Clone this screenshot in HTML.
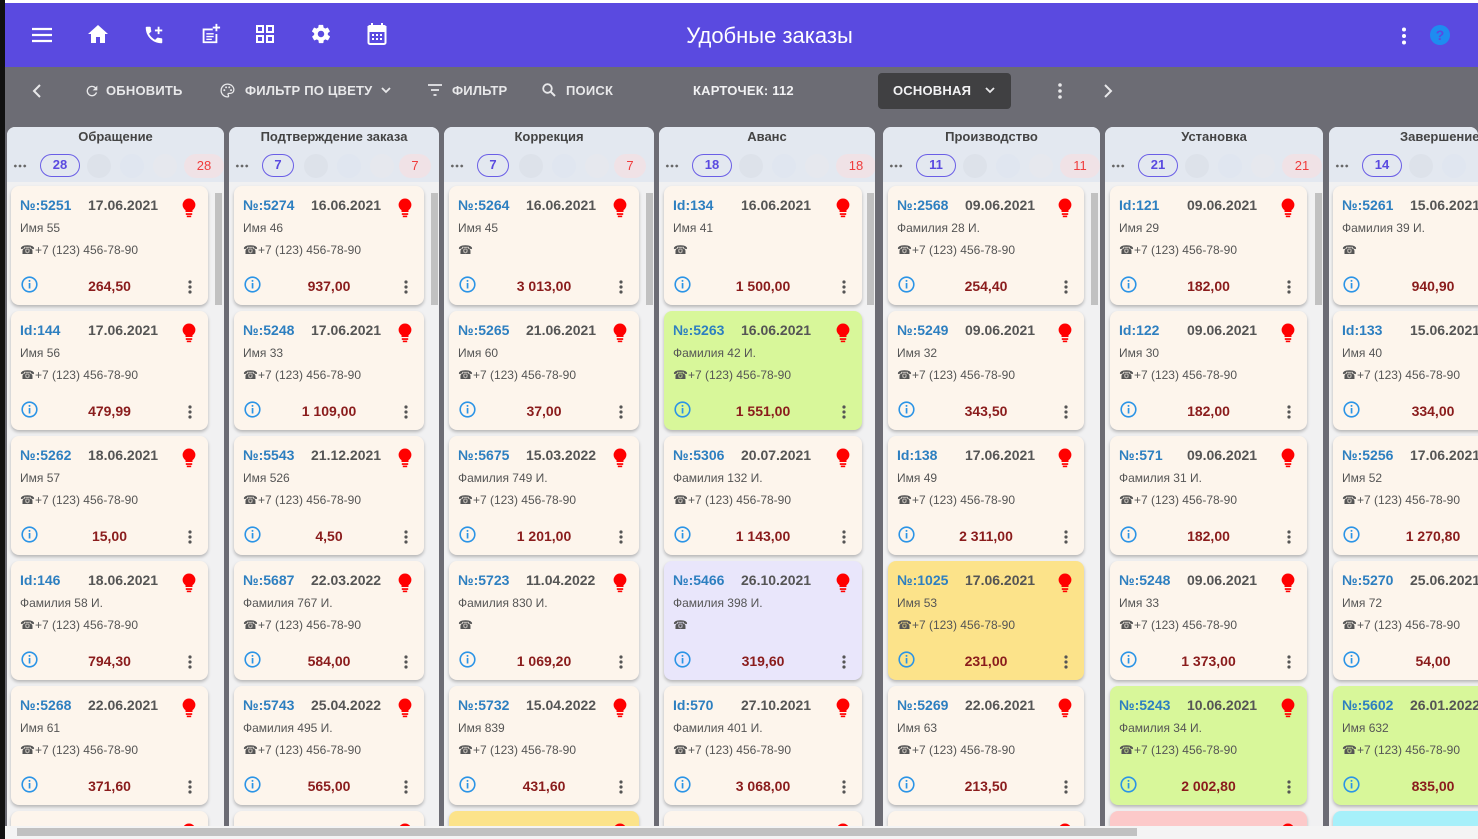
<!DOCTYPE html>
<html><head><meta charset="utf-8">
<style>
*{box-sizing:border-box;margin:0;padding:0}
html,body{overflow:hidden}
body{width:1478px;height:839px;overflow:hidden;background:#fff;font-family:"Liberation Sans",Arial,sans-serif;position:relative}
#lb{position:absolute;left:0;top:0;width:5px;height:839px;background:#111}
#hdr{position:absolute;left:5px;top:3px;width:1473px;height:64px;background:#5a4ae0}
#hdr svg{position:absolute}
#title{position:absolute;left:28px;width:1473px;top:20px;text-align:center;color:#fff;font-size:22px}
#tb{position:absolute;left:5px;top:67px;width:1473px;height:759px;background:#6c6c74;overflow:hidden}
.tbt{position:absolute;top:16px;color:#e8e8ea;font-size:13px;font-weight:bold;letter-spacing:.2px}
.col{position:absolute;top:60px;height:699px;background:#f1f1f2;border-radius:8px 8px 0 0;overflow:hidden}
.ch{position:absolute;left:0;top:0;width:100%;height:55px;background:#e3e8f0}
.ct{position:absolute;top:2px;width:100%;text-align:center;font-size:13px;font-weight:bold;color:#444}
.dd{position:absolute;left:6px;top:37px;width:14px;height:4px;background:radial-gradient(circle,#666 1.2px,transparent 1.5px) 0 0/4.7px 4px repeat-x}
.bo{position:absolute;left:33px;top:27px;width:40px;height:23px;border:1.5px solid #6a5ee6;border-radius:12px;text-align:center;font-size:13px;line-height:20px;color:#5a4ae0;font-weight:bold}
.g{position:absolute;top:27px;width:24px;height:24px;border-radius:12px}
.br{position:absolute;top:27px;width:40px;height:24px;border-radius:12px;background:#f0e2e6;color:#f03c3c;text-align:center;font-size:13px;line-height:24px}
.sb{position:absolute;top:66px;width:7px;height:112px;background:#c1c1c1}
.c{position:absolute;height:119px;background:#fdf5ec;border-radius:8px;box-shadow:0 2px 3px rgba(0,0,0,.25)}
.c .i{position:absolute;left:9px;top:11px;font-size:14px;font-weight:bold;color:#2d7fc0}
.c .d{position:absolute;left:77px;top:11px;font-size:14px;font-weight:bold;color:#555}
.c .n{position:absolute;left:9px;top:35px;font-size:12px;color:#555}
.c .p{position:absolute;left:9px;top:57px;font-size:12px;color:#555}
.c .a{position:absolute;left:40px;right:40px;top:92px;text-align:center;font-size:14px;font-weight:bold;color:#8a1c1c}
.c .bl{position:absolute;right:12px;top:12px}
.c .inf{position:absolute;left:10px;top:90px}
.c .dt{position:absolute;right:16px;top:94px}
.gr{background:#d8f79a}.lv{background:#e9e6fb}.ye{background:#fce38a}.pk{background:#fcc9c9}.cy{background:#a6f0fa}
#hs{position:absolute;left:5px;top:826px;width:1473px;height:13px;background:#f4f4f4}
#hs div{position:absolute;left:12px;top:2px;width:1120px;height:8px;background:#c1c1c1}
</style></head><body>
<div id="lb"></div>
<div id="hdr">
<svg style="left:26px;top:23px" width="22" height="18" viewBox="0 0 22 18"><path d="M1 3h20M1 9h20M1 15h20" stroke="#fff" stroke-width="2.2"/></svg>
<svg style="left:82px;top:21px" width="22" height="20" viewBox="0 0 22 20"><path d="M11 1L1 10h3v9h5v-6h4v6h5v-9h3z" fill="#fff"/></svg>
<svg style="left:138px;top:21px" width="22" height="22" viewBox="0 0 24 24"><path d="M20 15.5c-1.2 0-2.4-.2-3.6-.6-.3-.1-.7 0-1 .2l-2.2 2.2c-2.8-1.4-5.1-3.8-6.6-6.6l2.2-2.2c.3-.3.4-.7.2-1-.3-1.1-.5-2.3-.5-3.5 0-.6-.4-1-1-1H4c-.6 0-1 .4-1 1 0 9.4 7.6 17 17 17 .6 0 1-.4 1-1v-3.5c0-.6-.4-1-1-1zM18 6V3h-2v3h-3v2h3v3h2V8h3V6z" fill="#fff"/></svg>
<svg style="left:194px;top:20px" width="22" height="22" viewBox="0 0 24 24"><path d="M4 6h11v2H6v12h12v-8h2v10H4zM8 11h8v1.6H8zM8 14h8v1.6H8zM8 17h6v1.6H8zM18 1h2v3h3v2h-3v3h-2V6h-3V4h3z" fill="#fff"/></svg>
<svg style="left:250px;top:21px" width="20" height="20" viewBox="0 0 20 20"><path d="M2 2h6v6H2zM12 2h6v6h-6zM2 12h6v6H2zM12 12h6v6h-6z" fill="none" stroke="#fff" stroke-width="2"/></svg>
<svg style="left:305px;top:20px" width="22" height="22" viewBox="0 0 24 24"><path d="M19.4 13c0-.3.1-.6.1-1s0-.7-.1-1l2.1-1.6c.2-.2.2-.4.1-.6l-2-3.5c-.1-.2-.4-.3-.6-.2l-2.5 1c-.5-.4-1.1-.7-1.7-1l-.4-2.6c0-.2-.2-.4-.5-.4h-4c-.2 0-.4.2-.5.4l-.4 2.6c-.6.3-1.2.6-1.7 1l-2.5-1c-.2-.1-.5 0-.6.2l-2 3.5c-.1.2-.1.5.1.6L4.6 11c0 .3-.1.6-.1 1s0 .7.1 1l-2.1 1.6c-.2.2-.2.4-.1.6l2 3.5c.1.2.4.3.6.2l2.5-1c.5.4 1.1.7 1.7 1l.4 2.6c0 .2.2.4.5.4h4c.2 0 .4-.2.5-.4l.4-2.6c.6-.3 1.2-.6 1.7-1l2.5 1c.2.1.5 0 .6-.2l2-3.5c.1-.2.1-.5-.1-.6zM12 15.5c-1.9 0-3.5-1.6-3.5-3.5s1.6-3.5 3.5-3.5 3.5 1.6 3.5 3.5-1.6 3.5-3.5 3.5z" fill="#fff"/></svg>
<svg style="left:362px;top:19px" width="20" height="24" viewBox="0 0 20 24"><rect x="1.5" y="4" width="17" height="18" rx="1.5" fill="none" stroke="#fff" stroke-width="2"/><path d="M1.5 5h17v4h-17zM5 1v5M15 1v5" stroke="#fff" stroke-width="2" fill="#fff"/><path d="M5 12h2v2H5zM9 12h2v2H9zM13 12h2v2h-2zM5 16h2v2H5zM9 16h2v2H9zM13 16h2v2h-2z" fill="#fff"/></svg>
<div id="title">Удобные заказы</div>
<svg style="left:1396px;top:24px" width="6" height="18" viewBox="0 0 6 18"><circle cx="3" cy="2.5" r="2" fill="#fff"/><circle cx="3" cy="9" r="2" fill="#fff"/><circle cx="3" cy="15.5" r="2" fill="#fff"/></svg>
<svg style="left:1425px;top:22px" width="20" height="20" viewBox="0 0 20 20"><circle cx="10" cy="10" r="10" fill="#1e8cf0"/><text x="10" y="15" text-anchor="middle" font-size="14" font-weight="bold" fill="#5a4ae0" font-family="Liberation Sans">?</text></svg>
</div>
<div id="tb">
<svg style="position:absolute;left:27px;top:17px" width="10" height="14" viewBox="0 0 10 14"><path d="M8 1L2 7l6 6" stroke="#e8e8ea" stroke-width="2" fill="none"/></svg>
<svg style="position:absolute;left:79px;top:16px" width="16" height="16" viewBox="0 0 24 24"><path d="M17.6 6.4A8 8 0 1 0 19.7 14h-2.1A6 6 0 1 1 12 6c1.7 0 3.1.7 4.2 1.8L13 11h7V4z" fill="#e8e8ea"/></svg>
<div class="tbt" style="left:101px">ОБНОВИТЬ</div>
<svg style="position:absolute;left:214px;top:15px" width="17" height="17" viewBox="0 0 24 24"><path d="M12 3a9 9 0 0 0 0 18c.8 0 1.5-.7 1.5-1.5 0-.4-.1-.7-.4-1-.2-.3-.4-.6-.4-1 0-.8.7-1.5 1.5-1.5H16a5 5 0 0 0 5-5c0-4.4-4-8-9-8z" fill="none" stroke="#e8e8ea" stroke-width="1.8"/><circle cx="7.5" cy="11.5" r="1.4" fill="#e8e8ea"/><circle cx="10" cy="7.5" r="1.4" fill="#e8e8ea"/><circle cx="14.5" cy="7.5" r="1.4" fill="#e8e8ea"/><circle cx="17" cy="11.5" r="1.4" fill="#e8e8ea"/></svg>
<div class="tbt" style="left:240px">ФИЛЬТР ПО ЦВЕТУ</div>
<svg style="position:absolute;left:376px;top:20px" width="10" height="7" viewBox="0 0 10 7"><path d="M1 1l4 4 4-4" stroke="#e8e8ea" stroke-width="1.8" fill="none"/></svg>
<svg style="position:absolute;left:423px;top:17px" width="14" height="12" viewBox="0 0 14 12"><path d="M0 1h14M3 6h8M5.5 11h3" stroke="#e8e8ea" stroke-width="1.8"/></svg>
<div class="tbt" style="left:447px">ФИЛЬТР</div>
<svg style="position:absolute;left:537px;top:16px" width="14" height="14" viewBox="0 0 14 14"><circle cx="5.5" cy="5.5" r="4.3" stroke="#e8e8ea" stroke-width="1.8" fill="none"/><path d="M8.7 8.7L13 13" stroke="#e8e8ea" stroke-width="2"/></svg>
<div class="tbt" style="left:561px">ПОИСК</div>
<div class="tbt" style="left:688px;color:#f2f2f4">КАРТОЧЕК: 112</div>
<div style="position:absolute;left:873px;top:6px;width:133px;height:36px;background:#404042;border-radius:4px"></div>
<div class="tbt" style="left:888px;color:#f2f2f4">ОСНОВНАЯ</div>
<svg style="position:absolute;left:980px;top:20px" width="10" height="7" viewBox="0 0 10 7"><path d="M1 1l4 4 4-4" stroke="#e8e8ea" stroke-width="1.8" fill="none"/></svg>
<svg style="position:absolute;left:1052px;top:16px" width="6" height="16" viewBox="0 0 6 16"><circle cx="3" cy="2" r="1.8" fill="#e8e8ea"/><circle cx="3" cy="8" r="1.8" fill="#e8e8ea"/><circle cx="3" cy="14" r="1.8" fill="#e8e8ea"/></svg>
<svg style="position:absolute;left:1098px;top:17px" width="10" height="14" viewBox="0 0 10 14"><path d="M2 1l6 6-6 6" stroke="#e8e8ea" stroke-width="2" fill="none"/></svg>

<div class="col" style="left:2px;width:217px">
<div class="ch"><div class="ct">Обращение</div><div class="dd"></div><div class="bo">28</div><div class="g" style="left:80px;background:#dde2ea"></div><div class="g" style="left:113px;background:#e0e6f0"></div><div class="g" style="left:146px;background:#e6e8ee"></div><div class="br" style="left:177px">28</div></div>
<div class="sb" style="left:208px"></div>
<div class="c" style="left:4px;width:197px;top:59px"><span class="i">№:5251</span><span class="d">17.06.2021</span><div class="n">Имя 55</div><div class="p">☎+7 (123) 456-78-90</div><div class="a">264,50</div></div>
<div class="c" style="left:4px;width:197px;top:184px"><span class="i">Id:144</span><span class="d">17.06.2021</span><div class="n">Имя 56</div><div class="p">☎+7 (123) 456-78-90</div><div class="a">479,99</div></div>
<div class="c" style="left:4px;width:197px;top:309px"><span class="i">№:5262</span><span class="d">18.06.2021</span><div class="n">Имя 57</div><div class="p">☎+7 (123) 456-78-90</div><div class="a">15,00</div></div>
<div class="c" style="left:4px;width:197px;top:434px"><span class="i">Id:146</span><span class="d">18.06.2021</span><div class="n">Фамилия 58 И.</div><div class="p">☎+7 (123) 456-78-90</div><div class="a">794,30</div></div>
<div class="c" style="left:4px;width:197px;top:559px"><span class="i">№:5268</span><span class="d">22.06.2021</span><div class="n">Имя 61</div><div class="p">☎+7 (123) 456-78-90</div><div class="a">371,60</div></div>
<div class="c" style="left:4px;width:197px;top:684px"></div>
</div>

<div class="col" style="left:224px;width:210px">
<div class="ch"><div class="ct">Подтверждение заказа</div><div class="dd"></div><div class="bo" style="width:32px">7</div><div class="g" style="left:75px;background:#dde2ea"></div><div class="g" style="left:108px;background:#e0e6f0"></div><div class="g" style="left:141px;background:#e6e8ee"></div><div class="br" style="left:170px;width:32px">7</div></div>
<div class="sb" style="left:202px"></div>
<div class="c" style="left:5px;width:190px;top:59px"><span class="i">№:5274</span><span class="d">16.06.2021</span><div class="n">Имя 46</div><div class="p">☎+7 (123) 456-78-90</div><div class="a">937,00</div></div>
<div class="c" style="left:5px;width:190px;top:184px"><span class="i">№:5248</span><span class="d">17.06.2021</span><div class="n">Имя 33</div><div class="p">☎+7 (123) 456-78-90</div><div class="a">1 109,00</div></div>
<div class="c" style="left:5px;width:190px;top:309px"><span class="i">№:5543</span><span class="d">21.12.2021</span><div class="n">Имя 526</div><div class="p">☎+7 (123) 456-78-90</div><div class="a">4,50</div></div>
<div class="c" style="left:5px;width:190px;top:434px"><span class="i">№:5687</span><span class="d">22.03.2022</span><div class="n">Фамилия 767 И.</div><div class="p">☎+7 (123) 456-78-90</div><div class="a">584,00</div></div>
<div class="c" style="left:5px;width:190px;top:559px"><span class="i">№:5743</span><span class="d">25.04.2022</span><div class="n">Фамилия 495 И.</div><div class="p">☎+7 (123) 456-78-90</div><div class="a">565,00</div></div>
<div class="c" style="left:5px;width:190px;top:684px"></div>
</div>

<div class="col" style="left:439px;width:210px">
<div class="ch"><div class="ct">Коррекция</div><div class="dd"></div><div class="bo" style="width:32px">7</div><div class="g" style="left:75px;background:#dde2ea"></div><div class="g" style="left:108px;background:#e0e6f0"></div><div class="g" style="left:141px;background:#e6e8ee"></div><div class="br" style="left:170px;width:32px">7</div></div>
<div class="sb" style="left:202px"></div>
<div class="c" style="left:5px;width:190px;top:59px"><span class="i">№:5264</span><span class="d">16.06.2021</span><div class="n">Имя 45</div><div class="p">☎</div><div class="a">3 013,00</div></div>
<div class="c" style="left:5px;width:190px;top:184px"><span class="i">№:5265</span><span class="d">21.06.2021</span><div class="n">Имя 60</div><div class="p">☎+7 (123) 456-78-90</div><div class="a">37,00</div></div>
<div class="c" style="left:5px;width:190px;top:309px"><span class="i">№:5675</span><span class="d">15.03.2022</span><div class="n">Фамилия 749 И.</div><div class="p">☎+7 (123) 456-78-90</div><div class="a">1 201,00</div></div>
<div class="c" style="left:5px;width:190px;top:434px"><span class="i">№:5723</span><span class="d">11.04.2022</span><div class="n">Фамилия 830 И.</div><div class="p">☎</div><div class="a">1 069,20</div></div>
<div class="c" style="left:5px;width:190px;top:559px"><span class="i">№:5732</span><span class="d">15.04.2022</span><div class="n">Имя 839</div><div class="p">☎+7 (123) 456-78-90</div><div class="a">431,60</div></div>
<div class="c ye" style="left:5px;width:190px;top:684px"></div>
</div>

<div class="col" style="left:654px;width:216px">
<div class="ch"><div class="ct">Аванс</div><div class="dd"></div><div class="bo">18</div><div class="g" style="left:80px;background:#dde2ea"></div><div class="g" style="left:113px;background:#e0e6f0"></div><div class="g" style="left:146px;background:#e6e8ee"></div><div class="br" style="left:177px">18</div></div>
<div class="sb" style="left:208px"></div>
<div class="c" style="left:5px;width:198px;top:59px"><span class="i">Id:134</span><span class="d">16.06.2021</span><div class="n">Имя 41</div><div class="p">☎</div><div class="a">1 500,00</div></div>
<div class="c gr" style="left:5px;width:198px;top:184px"><span class="i">№:5263</span><span class="d">16.06.2021</span><div class="n">Фамилия 42 И.</div><div class="p">☎+7 (123) 456-78-90</div><div class="a">1 551,00</div></div>
<div class="c" style="left:5px;width:198px;top:309px"><span class="i">№:5306</span><span class="d">20.07.2021</span><div class="n">Фамилия 132 И.</div><div class="p">☎+7 (123) 456-78-90</div><div class="a">1 143,00</div></div>
<div class="c lv" style="left:5px;width:198px;top:434px"><span class="i">№:5466</span><span class="d">26.10.2021</span><div class="n">Фамилия 398 И.</div><div class="p">☎</div><div class="a">319,60</div></div>
<div class="c" style="left:5px;width:198px;top:559px"><span class="i">Id:570</span><span class="d">27.10.2021</span><div class="n">Фамилия 401 И.</div><div class="p">☎+7 (123) 456-78-90</div><div class="a">3 068,00</div></div>
<div class="c" style="left:5px;width:198px;top:684px"></div>
</div>

<div class="col" style="left:878px;width:217px">
<div class="ch"><div class="ct">Производство</div><div class="dd"></div><div class="bo">11</div><div class="g" style="left:80px;background:#dde2ea"></div><div class="g" style="left:113px;background:#e0e6f0"></div><div class="g" style="left:146px;background:#e6e8ee"></div><div class="br" style="left:177px">11</div></div>
<div class="sb" style="left:208px"></div>
<div class="c" style="left:5px;width:196px;top:59px"><span class="i">№:2568</span><span class="d">09.06.2021</span><div class="n">Фамилия 28 И.</div><div class="p">☎+7 (123) 456-78-90</div><div class="a">254,40</div></div>
<div class="c" style="left:5px;width:196px;top:184px"><span class="i">№:5249</span><span class="d">09.06.2021</span><div class="n">Имя 32</div><div class="p">☎+7 (123) 456-78-90</div><div class="a">343,50</div></div>
<div class="c" style="left:5px;width:196px;top:309px"><span class="i">Id:138</span><span class="d">17.06.2021</span><div class="n">Имя 49</div><div class="p">☎+7 (123) 456-78-90</div><div class="a">2 311,00</div></div>
<div class="c ye" style="left:5px;width:196px;top:434px"><span class="i">№:1025</span><span class="d">17.06.2021</span><div class="n">Имя 53</div><div class="p">☎+7 (123) 456-78-90</div><div class="a">231,00</div></div>
<div class="c" style="left:5px;width:196px;top:559px"><span class="i">№:5269</span><span class="d">22.06.2021</span><div class="n">Имя 63</div><div class="p">☎+7 (123) 456-78-90</div><div class="a">213,50</div></div>
<div class="c" style="left:5px;width:196px;top:684px"></div>
</div>

<div class="col" style="left:1100px;width:218px">
<div class="ch"><div class="ct">Установка</div><div class="dd"></div><div class="bo">21</div><div class="g" style="left:80px;background:#dde2ea"></div><div class="g" style="left:113px;background:#e0e6f0"></div><div class="g" style="left:146px;background:#e6e8ee"></div><div class="br" style="left:177px">21</div></div>
<div class="sb" style="left:210px"></div>
<div class="c" style="left:5px;width:197px;top:59px"><span class="i">Id:121</span><span class="d">09.06.2021</span><div class="n">Имя 29</div><div class="p">☎+7 (123) 456-78-90</div><div class="a">182,00</div></div>
<div class="c" style="left:5px;width:197px;top:184px"><span class="i">Id:122</span><span class="d">09.06.2021</span><div class="n">Имя 30</div><div class="p">☎+7 (123) 456-78-90</div><div class="a">182,00</div></div>
<div class="c" style="left:5px;width:197px;top:309px"><span class="i">№:571</span><span class="d">09.06.2021</span><div class="n">Фамилия 31 И.</div><div class="p">☎+7 (123) 456-78-90</div><div class="a">182,00</div></div>
<div class="c" style="left:5px;width:197px;top:434px"><span class="i">№:5248</span><span class="d">09.06.2021</span><div class="n">Имя 33</div><div class="p">☎+7 (123) 456-78-90</div><div class="a">1 373,00</div></div>
<div class="c gr" style="left:5px;width:197px;top:559px"><span class="i">№:5243</span><span class="d">10.06.2021</span><div class="n">Фамилия 34 И.</div><div class="p">☎+7 (123) 456-78-90</div><div class="a">2 002,80</div></div>
<div class="c pk" style="left:5px;width:197px;top:684px"></div>
</div>

<div class="col" style="left:1324px;width:149px">
<div class="ch"><div class="ct" style="text-align:left;left:71px">Завершение</div><div class="dd"></div><div class="bo">14</div><div class="g" style="left:80px;background:#dde2ea"></div><div class="g" style="left:113px;background:#e0e6f0"></div></div>
<div class="c" style="left:4px;width:200px;top:59px"><span class="i">№:5261</span><span class="d">15.06.2021</span><div class="n">Фамилия 39 И.</div><div class="p">☎</div><div class="a">940,90</div></div>
<div class="c" style="left:4px;width:200px;top:184px"><span class="i">Id:133</span><span class="d">15.06.2021</span><div class="n">Имя 40</div><div class="p">☎+7 (123) 456-78-90</div><div class="a">334,00</div></div>
<div class="c" style="left:4px;width:200px;top:309px"><span class="i">№:5256</span><span class="d">17.06.2021</span><div class="n">Имя 52</div><div class="p">☎+7 (123) 456-78-90</div><div class="a">1 270,80</div></div>
<div class="c" style="left:4px;width:200px;top:434px"><span class="i">№:5270</span><span class="d">25.06.2021</span><div class="n">Имя 72</div><div class="p">☎+7 (123) 456-78-90</div><div class="a">54,00</div></div>
<div class="c gr" style="left:4px;width:200px;top:559px"><span class="i">№:5602</span><span class="d">26.01.2022</span><div class="n">Имя 632</div><div class="p">☎+7 (123) 456-78-90</div><div class="a">835,00</div></div>
<div class="c cy" style="left:4px;width:200px;top:684px"></div>
</div>
</div>
<div id="hs"><div></div></div>

<script>
document.querySelectorAll('.c').forEach(function(c){
  var bulb='<svg class="bl" width="14" height="20" viewBox="0 0 14 20"><path d="M7 0.5a6.3 6.3 0 0 0-3.5 11.6V14h7v-1.9A6.3 6.3 0 0 0 7 0.5z" fill="#f00"/><rect x="3.8" y="15.2" width="6.4" height="1.7" fill="#f00"/><rect x="4.8" y="17.6" width="4.4" height="1.6" fill="#f00"/></svg>';
  var inf='<svg class="inf" width="17" height="17" viewBox="0 0 17 17"><circle cx="8.5" cy="8.5" r="7.3" fill="none" stroke="#2b94e6" stroke-width="1.6"/><rect x="7.7" y="7" width="1.7" height="5.5" fill="#2b94e6"/><circle cx="8.5" cy="4.9" r="1" fill="#2b94e6"/></svg>';
  var dt='<svg class="dt" width="4" height="14" viewBox="0 0 4 14"><circle cx="2" cy="2" r="1.6" fill="#555"/><circle cx="2" cy="7" r="1.6" fill="#555"/><circle cx="2" cy="12" r="1.6" fill="#555"/></svg>';
  c.insertAdjacentHTML('beforeend',bulb+inf+dt);
});
</script>
</body></html>
